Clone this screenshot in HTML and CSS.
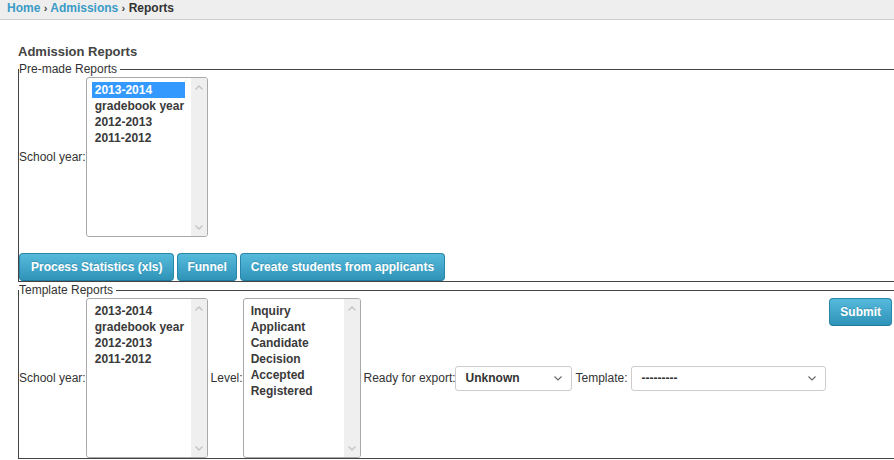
FILE: index.html
```html
<!DOCTYPE html>
<html>
<head>
<meta charset="utf-8">
<title>Reports</title>
<link rel="stylesheet" href="styles.css">
</head>
<body>
<div class="crumbs"><a href="#">Home</a> <span class="sep">›</span> <a href="#">Admissions</a> <span class="sep">›</span> <span class="cur">Reports</span></div>
<div class="main">
  <h2 class="title">Admission Reports</h2>
  <fieldset class="group">
    <legend>Pre-made Reports</legend>
    <div class="row">
      <span class="label">School year:</span>
      <div class="listbox year">
        <div class="opts">
          <div class="opt sel">2013-2014</div>
          <div class="opt">gradebook year</div>
          <div class="opt">2012-2013</div>
          <div class="opt">2011-2012</div>
        </div>
        <div class="track">
          <svg width="8" height="5" viewBox="0 0 8 5"><polyline points="0.5,4.5 4,1 7.5,4.5" fill="none" stroke="#c4c4c4" stroke-width="1.3"/></svg>
          <svg width="8" height="5" viewBox="0 0 8 5"><polyline points="0.5,0.5 4,4 7.5,0.5" fill="none" stroke="#c4c4c4" stroke-width="1.3"/></svg>
        </div>
      </div>
    </div>
    <div class="btns">
      <button class="btn wide">Process Statistics (xls)</button>
      <button class="btn narrow">Funnel</button>
      <button class="btn">Create students from applicants</button>
    </div>
  </fieldset>
  <fieldset class="group second">
    <legend>Template Reports</legend>
    <div class="row">
      <span class="label">School year:</span>
      <div class="listbox year">
        <div class="opts">
          <div class="opt">2013-2014</div>
          <div class="opt">gradebook year</div>
          <div class="opt">2012-2013</div>
          <div class="opt">2011-2012</div>
        </div>
        <div class="track">
          <svg width="8" height="5" viewBox="0 0 8 5"><polyline points="0.5,4.5 4,1 7.5,4.5" fill="none" stroke="#c4c4c4" stroke-width="1.3"/></svg>
          <svg width="8" height="5" viewBox="0 0 8 5"><polyline points="0.5,0.5 4,4 7.5,0.5" fill="none" stroke="#c4c4c4" stroke-width="1.3"/></svg>
        </div>
      </div>
      <span class="label">Level:</span>
      <div class="listbox level">
        <div class="opts">
          <div class="opt">Inquiry</div>
          <div class="opt">Applicant</div>
          <div class="opt">Candidate</div>
          <div class="opt">Decision</div>
          <div class="opt">Accepted</div>
          <div class="opt">Registered</div>
        </div>
        <div class="track">
          <svg width="8" height="5" viewBox="0 0 8 5"><polyline points="0.5,4.5 4,1 7.5,4.5" fill="none" stroke="#c4c4c4" stroke-width="1.3"/></svg>
          <svg width="8" height="5" viewBox="0 0 8 5"><polyline points="0.5,0.5 4,4 7.5,0.5" fill="none" stroke="#c4c4c4" stroke-width="1.3"/></svg>
        </div>
      </div>
      <span class="label">Ready for export:</span>
      <div class="dd ready">
        <span>Unknown</span>
        <svg width="8" height="5" viewBox="0 0 8 5"><polyline points="0.5,0.5 4,4 7.5,0.5" fill="none" stroke="#666" stroke-width="1.1"/></svg>
      </div>
      <span class="label">Template:</span>
      <div class="dd tpl">
        <span>---------</span>
        <svg width="8" height="5" viewBox="0 0 8 5"><polyline points="0.5,0.5 4,4 7.5,0.5" fill="none" stroke="#666" stroke-width="1.1"/></svg>
      </div>
      <button class="btn submit">Submit</button>
    </div>
  </fieldset>
</div>
</body>
</html>
```
FILE: styles.css
```css
html {
  overflow: hidden;
}
body {
  margin: 0;
  font-family: "Liberation Sans", Arial, sans-serif;
  font-size: 12px;
  color: #333;
  background: #fff;
}
.crumbs {
  height: 19px;
  line-height: 17px;
  padding-left: 7px;
  background: #eeeeee;
  border-bottom: 1px solid #cccccc;
  font-weight: bold;
  font-size: 12px;
  color: #333;
}
.crumbs a {
  color: #3b9bc6;
  text-decoration: none;
}
.crumbs .sep {
  color: #444;
  font-size: 11px;
}
.main {
  padding-left: 18px;
}
.title {
  margin: 24px 0 0;
  font-size: 13px;
  line-height: 15px;
  font-weight: bold;
  color: #444;
}
.group {
  box-sizing: border-box;
  width: 877px;
  min-width: 0;
  margin: 3px 0 0;
  padding: 0;
  border: 1px solid #444;
}
.group.second {
  margin-top: 1px;
}
.group legend {
  padding: 0 3px 0 0;
  font-size: 12px;
  line-height: 15px;
  color: #333;
}
.row {
  display: flex;
  align-items: center;
}
.label {
  font-size: 12px;
  color: #333;
  white-space: nowrap;
}
.listbox {
  box-sizing: border-box;
  height: 160px;
  border: 1px solid #a9a9a9;
  border-radius: 3px;
  background: #fff;
  display: flex;
  margin-right: 3px;
  overflow: hidden;
}
.listbox.year {
  width: 122px;
}
.listbox.level {
  width: 118px;
}
.opts {
  flex: 1;
  padding: 4px 6px 0 5px;
}
.listbox.level .opts {
  padding-left: 4px;
}
.opt {
  height: 16px;
  line-height: 16px;
  padding-left: 3px;
  font-weight: bold;
  font-size: 12px;
  color: #3a3a3a;
  white-space: nowrap;
}
.opt.sel {
  background: #3399ff;
  color: #fff;
}
.track {
  width: 16px;
  background: #efefef;
  display: flex;
  flex-direction: column;
  align-items: center;
  justify-content: space-between;
  padding: 7px 0 6px;
  box-sizing: border-box;
}
.track svg {
  display: block;
}
.btns {
  display: flex;
  gap: 3px;
  margin-top: 16px;
}
.btn {
  box-sizing: border-box;
  height: 28px;
  padding: 0 10px;
  border: 1px solid #2a86a8;
  border-bottom-color: #217a9b;
  border-radius: 4px;
  background: linear-gradient(#55badc, #2e93b7);
  color: #fff;
  font-family: "Liberation Sans", Arial, sans-serif;
  font-weight: bold;
  font-size: 12px;
  text-shadow: 0 -1px 0 rgba(0, 0, 0, 0.15);
  white-space: nowrap;
  cursor: pointer;
}
.btn.wide {
  padding: 0 11px;
}
.btn.narrow {
  padding: 0 9px;
}
.btn.submit {
  align-self: flex-start;
  margin-left: auto;
  margin-right: 2px;
}
.dd {
  box-sizing: border-box;
  height: 25px;
  border: 1px solid #cccccc;
  border-radius: 3px;
  background: #fff;
  display: flex;
  align-items: center;
  justify-content: space-between;
  padding: 0 9px 0 10px;
  font-weight: bold;
  font-size: 12px;
  color: #333;
  margin-right: 3px;
}
.dd.ready {
  width: 118px;
  margin-left: -1px;
}
.dd.tpl {
  width: 196px;
  margin-left: 3px;
}
.dd svg {
  display: block;
}
```
